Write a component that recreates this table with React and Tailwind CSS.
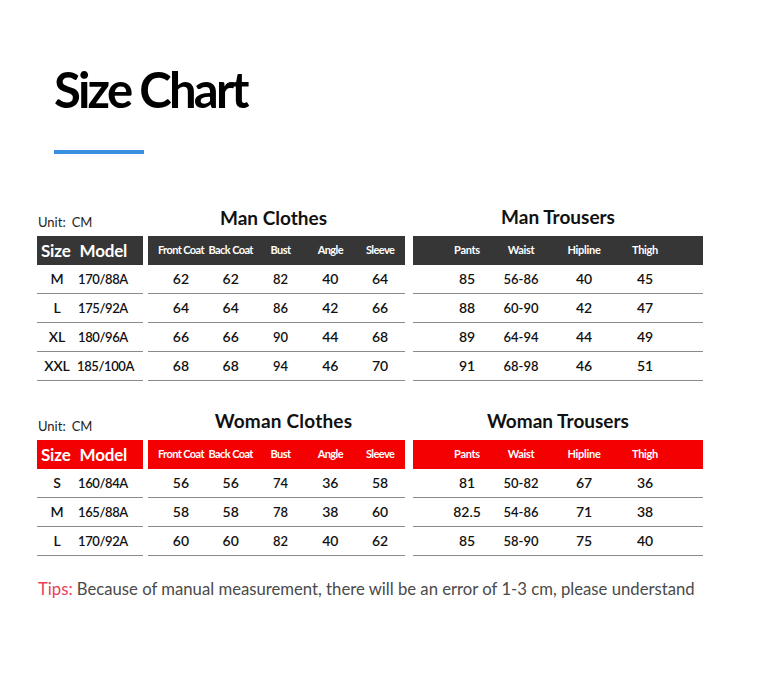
const manClothes = [
  ['M', '170/88A', '62', '62', '82', '40', '64'],
  ['L', '175/92A', '64', '64', '86', '42', '66'],
  ['XL', '180/96A', '66', '66', '90', '44', '68'],
  ['XXL', '185/100A', '68', '68', '94', '46', '70'],
];
const manTrousers = [
  ['85', '56-86', '40', '45'],
  ['88', '60-90', '42', '47'],
  ['89', '64-94', '44', '49'],
  ['91', '68-98', '46', '51'],
];
const womanClothes = [
  ['S', '160/84A', '56', '56', '74', '36', '58'],
  ['M', '165/88A', '58', '58', '78', '38', '60'],
  ['L', '170/92A', '60', '60', '82', '40', '62'],
];
const womanTrousers = [
  ['81', '50-82', '67', '36'],
  ['82.5', '54-86', '71', '38'],
  ['85', '58-90', '75', '40'],
];

const coatCols = ['Front Coat', 'Back Coat', 'Bust', 'Angle', 'Sleeve'];
const pantCols = ['Pants', 'Waist', 'Hipline', 'Thigh'];

const SizeTable = ({ clothesTitle, trousersTitle, clothes, trousers, headBg, titleShift }) => (
  <div className="flex items-start pl-[37px]">
    {/* Size / Model */}
    <div className="w-[106px] flex flex-col">
      <div className="h-[29px] pt-[7px] pl-[1px] text-[13px] leading-4 text-[#222]">
        Unit:<span className="ml-[6px]">CM</span>
      </div>
      <div className={`h-[29px] ${headBg} flex items-center pl-[4px] gap-[9px] text-white font-bold text-[17px] tracking-[-0.2px]`}>
        <span>Size</span>
        <span>Model</span>
      </div>
      {clothes.map((r) => (
        <div key={r[1]} className="h-[29px] border-b border-[#8a8a8a] grid grid-cols-[40px_52px] items-baseline leading-[28px] text-[14px] font-semibold text-[#111]">
          <span className="text-center">{r[0]}</span>
          <span className="text-center whitespace-nowrap text-[13px] tracking-[-0.4px]">{r[1]}</span>
        </div>
      ))}
    </div>

    {/* Clothes */}
    <div className="w-[257px] ml-[5px] flex flex-col">
      <div className={`h-[29px] text-center text-[19px] leading-5 font-bold text-[#111] ${titleShift}`}>{clothesTitle}</div>
      <div className={`h-[29px] ${headBg} grid grid-cols-5 pl-[8px] items-center text-white font-bold text-[11px] tracking-[-0.6px]`}>
        {coatCols.map((c) => (
          <span key={c} className="text-center whitespace-nowrap">{c}</span>
        ))}
      </div>
      {clothes.map((r) => (
        <div key={r[1]} className="h-[29px] border-b border-[#8a8a8a] grid grid-cols-5 pl-[8px] items-baseline leading-[28px] text-[14px] font-semibold text-[#111]">
          {r.slice(2).map((v, i) => (
            <span key={i} className={`text-center ${i === 2 ? 'text-[13px]' : ''}`}>{v}</span>
          ))}
        </div>
      ))}
    </div>

    {/* Trousers */}
    <div className="w-[290px] ml-[8px] flex flex-col">
      <div className="h-[29px] text-center text-[19px] leading-5 font-bold text-[#111]">{trousersTitle}</div>
      <div className={`h-[29px] ${headBg} grid grid-cols-[60px_48px_78px_44px] pl-[24px] items-center text-white font-bold text-[11px] tracking-[-0.3px]`}>
        {pantCols.map((c) => (
          <span key={c} className="text-center">{c}</span>
        ))}
      </div>
      {trousers.map((r) => (
        <div key={r[0]} className="h-[29px] border-b border-[#8a8a8a] grid grid-cols-[60px_48px_78px_44px] pl-[24px] items-baseline leading-[28px] text-[14px] font-semibold text-[#111]">
          {r.map((v, i) => (
            <span key={i} className={`text-center ${i === 1 ? 'text-[13px]' : ''}`}>{v}</span>
          ))}
        </div>
      ))}
    </div>
  </div>
);

export default function App() {
  return (
    <div className="w-[782px] h-[686px] bg-white font-['Lato','Liberation_Sans',sans-serif] pt-[65px]">
      {/* Heading */}
      <h1 className="pl-[54px] h-[50px] text-[49px] leading-none font-bold text-black tracking-[-2.8px]">Size Chart</h1>
      <div className="ml-[54px] mt-[35px] w-[90px] h-[4px] bg-[#3b8fe0]" />

      <div className="mt-[53px]">
        <SizeTable
          clothesTitle="Man Clothes"
          trousersTitle="Man Trousers"
          clothes={manClothes}
          trousers={manTrousers}
          headBg="bg-[#363636]"
          titleShift="pt-[1px] pr-[6px]"
        />
      </div>

      <div className="mt-[30px]">
        <SizeTable
          clothesTitle="Woman Clothes"
          trousersTitle="Woman Trousers"
          clothes={womanClothes}
          trousers={womanTrousers}
          headBg="bg-[#f50000]"
          titleShift="pl-[14px] tracking-[0.2px]"
        />
      </div>

      <p className="mt-[21px] pl-[38px] text-[16.7px] leading-6 text-[#4a4a4a]">
        <span className="text-[#e8405a]">Tips:</span> Because of manual measurement, there will be an error of 1-3 cm, please understand
      </p>
    </div>
  );
}
